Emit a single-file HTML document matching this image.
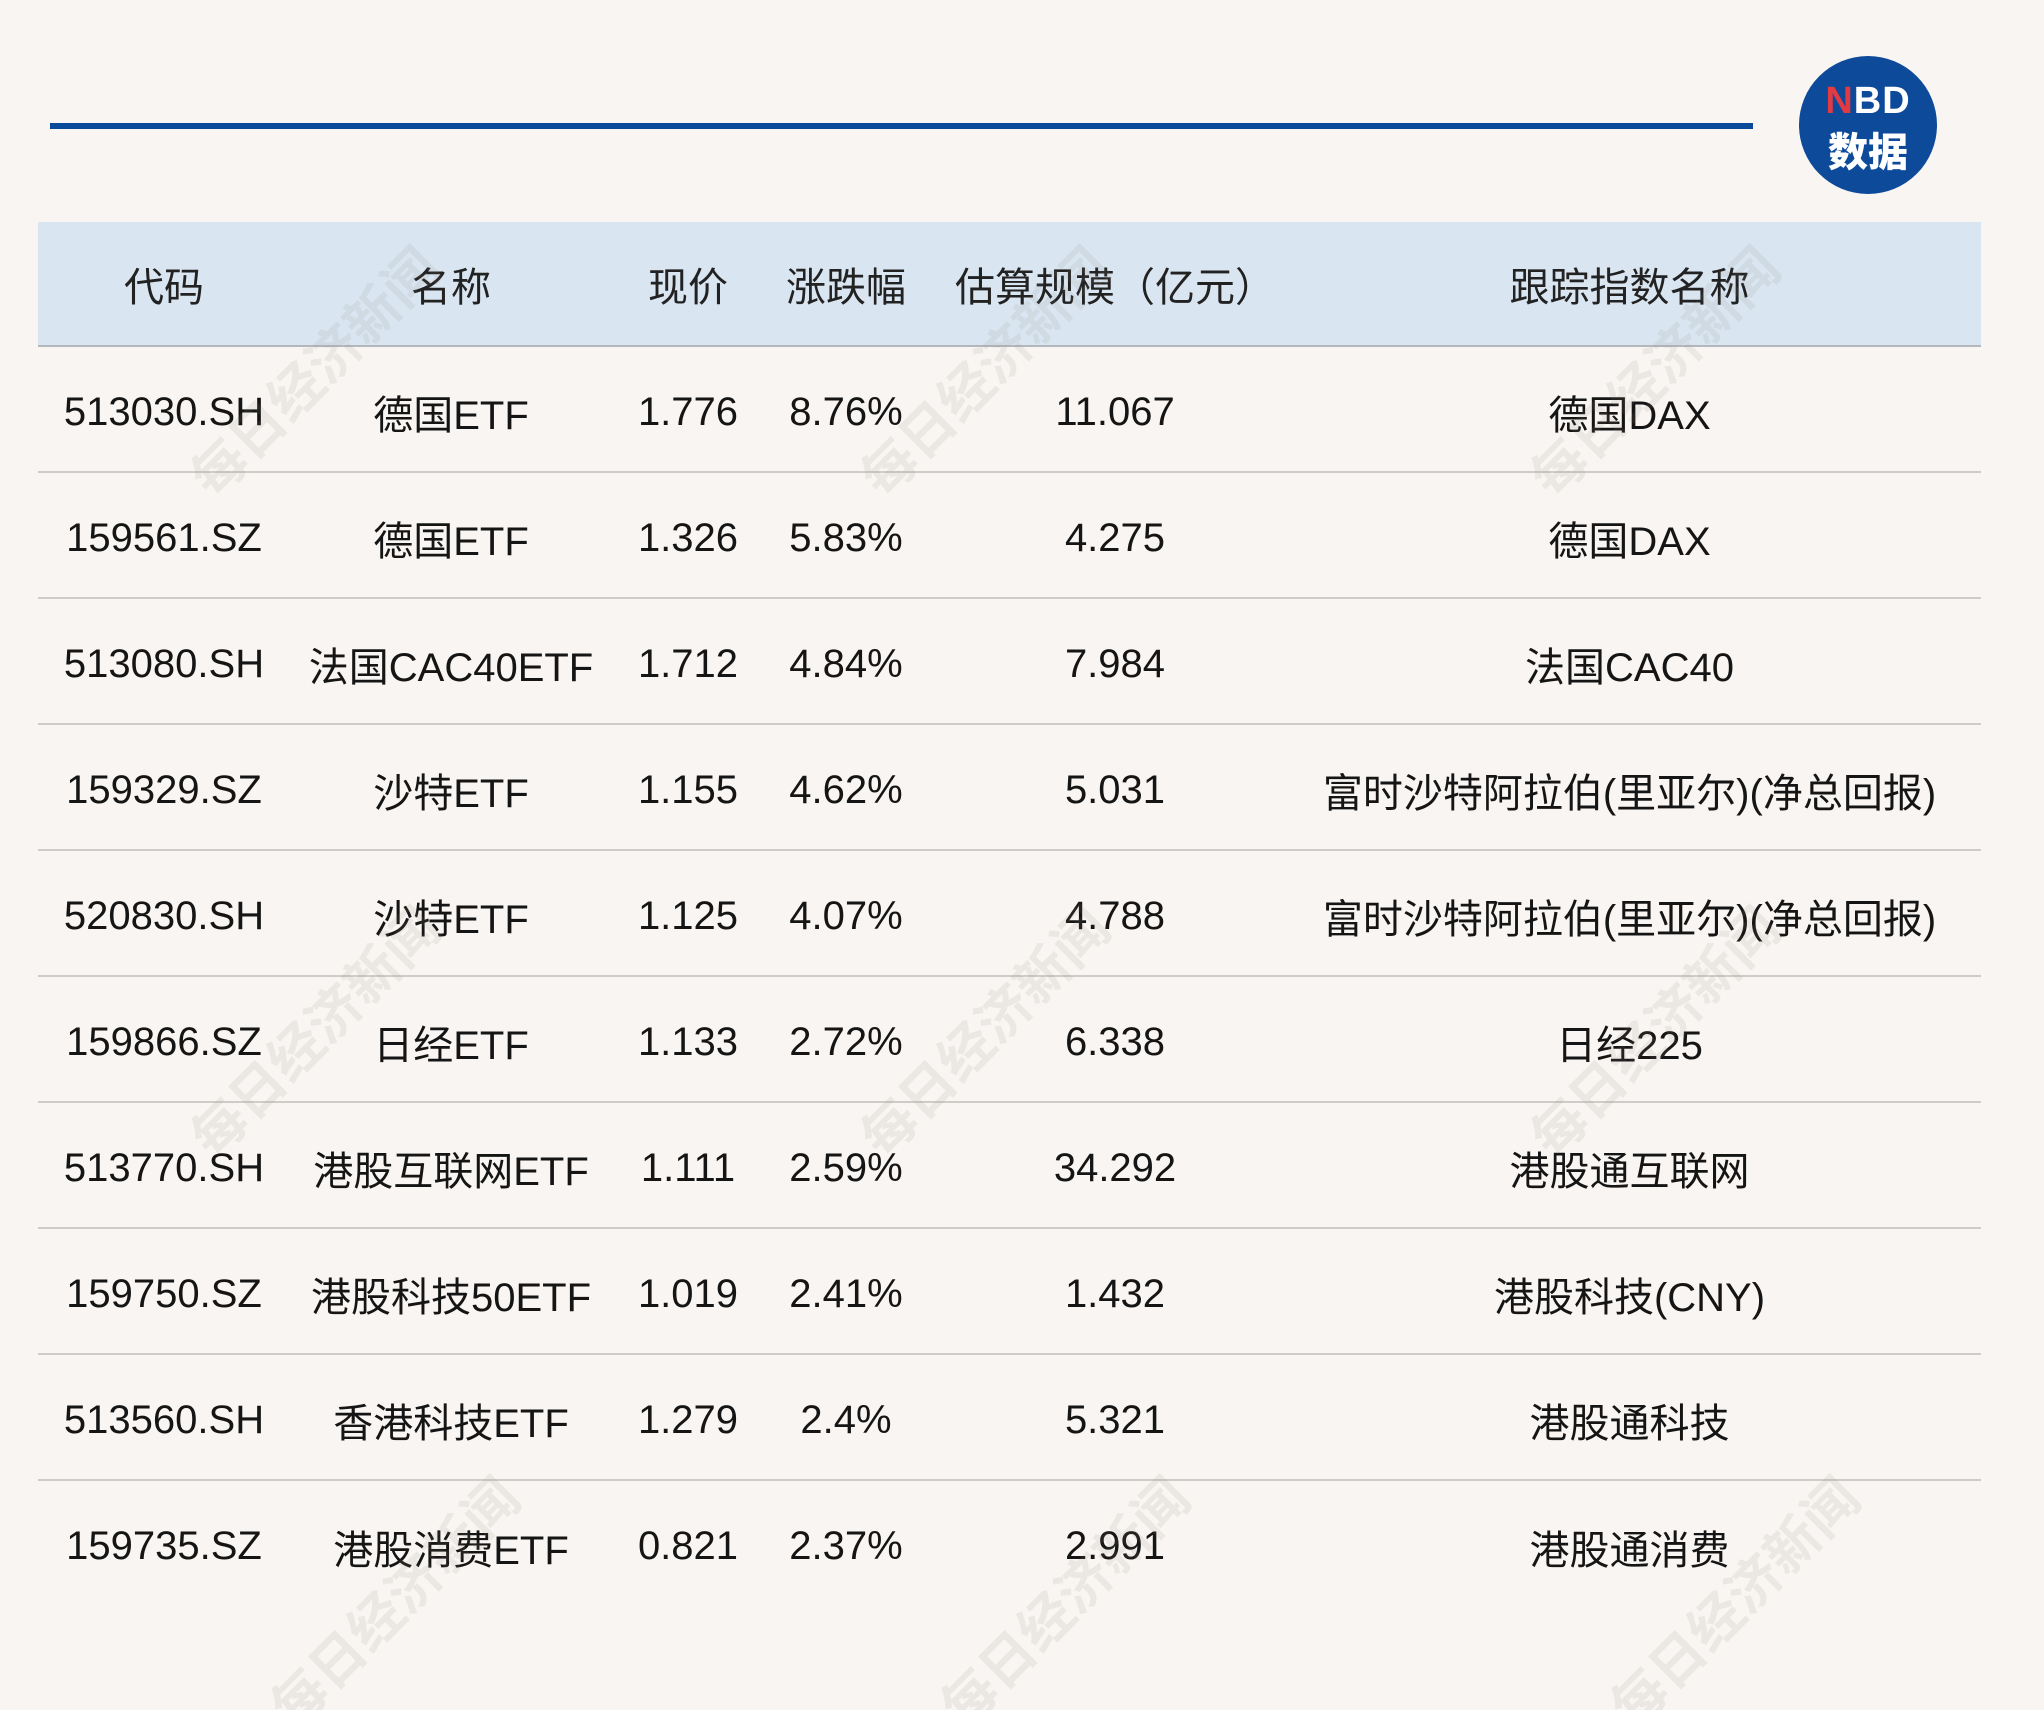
<!DOCTYPE html>
<html><head><meta charset="utf-8"><style>
html,body{margin:0;padding:0;width:2044px;height:1710px;overflow:hidden}
body{background:#f8f5f2;position:relative;font-family:"Liberation Sans","Noto Sans CJK SC",sans-serif;color:#151515}
.bar{position:absolute;left:50px;top:123px;width:1703px;height:6px;background:#0b4a9b}
.logo{position:absolute;left:1799px;top:56px;width:138px;height:138px;border-radius:50%;background:#0d4a9a;color:#fff;text-align:center;font-weight:bold}
.logo .a{position:absolute;top:24px;left:0;width:100%;font-size:38px;letter-spacing:1px}
.logo .a span{color:#e23a43}
.logo .b{position:absolute;top:64px;left:0;width:100%;font-size:40px;font-family:"Noto Sans CJK SC",sans-serif;font-weight:900}
table{position:absolute;left:38px;top:222px;width:1943px;border-collapse:collapse;font-size:40px}
th{background:#d9e5f1;height:123px;font-weight:normal;color:#222;border-bottom:2px solid #b4b8bd;padding:0}
td{height:126px;text-align:center;padding:6px 0 0 0;box-sizing:border-box;border-bottom:2px solid #cfcbc8}
td:last-child,th:last-child{padding-right:24px}
tr:last-child td{border-bottom:none}
.wmwrap{position:absolute;left:0;top:0;width:2044px;height:1710px;overflow:hidden}
.wm{position:absolute;font-size:54px;color:rgba(150,140,135,0.12);transform:rotate(-45deg);font-family:"Noto Sans CJK SC",sans-serif;font-weight:bold;white-space:nowrap}
</style></head><body>
<div class="bar"></div>
<div class="logo"><div class="a"><span>N</span>BD</div><div class="b">数据</div></div>
<table>
<colgroup><col style="width:252px"><col style="width:322px"><col style="width:152px"><col style="width:164px"><col style="width:374px"><col></colgroup>
<tr><th>代码</th><th>名称</th><th>现价</th><th>涨跌幅</th><th>估算规模（亿元）</th><th>跟踪指数名称</th></tr>
<tr><td>513030.SH</td><td>德国ETF</td><td>1.776</td><td>8.76%</td><td>11.067</td><td>德国DAX</td></tr>
<tr><td>159561.SZ</td><td>德国ETF</td><td>1.326</td><td>5.83%</td><td>4.275</td><td>德国DAX</td></tr>
<tr><td>513080.SH</td><td>法国CAC40ETF</td><td>1.712</td><td>4.84%</td><td>7.984</td><td>法国CAC40</td></tr>
<tr><td>159329.SZ</td><td>沙特ETF</td><td>1.155</td><td>4.62%</td><td>5.031</td><td>富时沙特阿拉伯(里亚尔)(净总回报)</td></tr>
<tr><td>520830.SH</td><td>沙特ETF</td><td>1.125</td><td>4.07%</td><td>4.788</td><td>富时沙特阿拉伯(里亚尔)(净总回报)</td></tr>
<tr><td>159866.SZ</td><td>日经ETF</td><td>1.133</td><td>2.72%</td><td>6.338</td><td>日经225</td></tr>
<tr><td>513770.SH</td><td>港股互联网ETF</td><td>1.111</td><td>2.59%</td><td>34.292</td><td>港股通互联网</td></tr>
<tr><td>159750.SZ</td><td>港股科技50ETF</td><td>1.019</td><td>2.41%</td><td>1.432</td><td>港股科技(CNY)</td></tr>
<tr><td>513560.SH</td><td>香港科技ETF</td><td>1.279</td><td>2.4%</td><td>5.321</td><td>港股通科技</td></tr>
<tr><td>159735.SZ</td><td>港股消费ETF</td><td>0.821</td><td>2.37%</td><td>2.991</td><td>港股通消费</td></tr>
</table>
<div class="wmwrap">
<div class="wm" style="left:150px;top:330px">每日经济新闻</div>
<div class="wm" style="left:820px;top:330px">每日经济新闻</div>
<div class="wm" style="left:1490px;top:330px">每日经济新闻</div>
<div class="wm" style="left:150px;top:990px">每日经济新闻</div>
<div class="wm" style="left:820px;top:990px">每日经济新闻</div>
<div class="wm" style="left:1490px;top:990px">每日经济新闻</div>
<div class="wm" style="left:230px;top:1560px">每日经济新闻</div>
<div class="wm" style="left:900px;top:1560px">每日经济新闻</div>
<div class="wm" style="left:1570px;top:1560px">每日经济新闻</div>
</div>
</body></html>
